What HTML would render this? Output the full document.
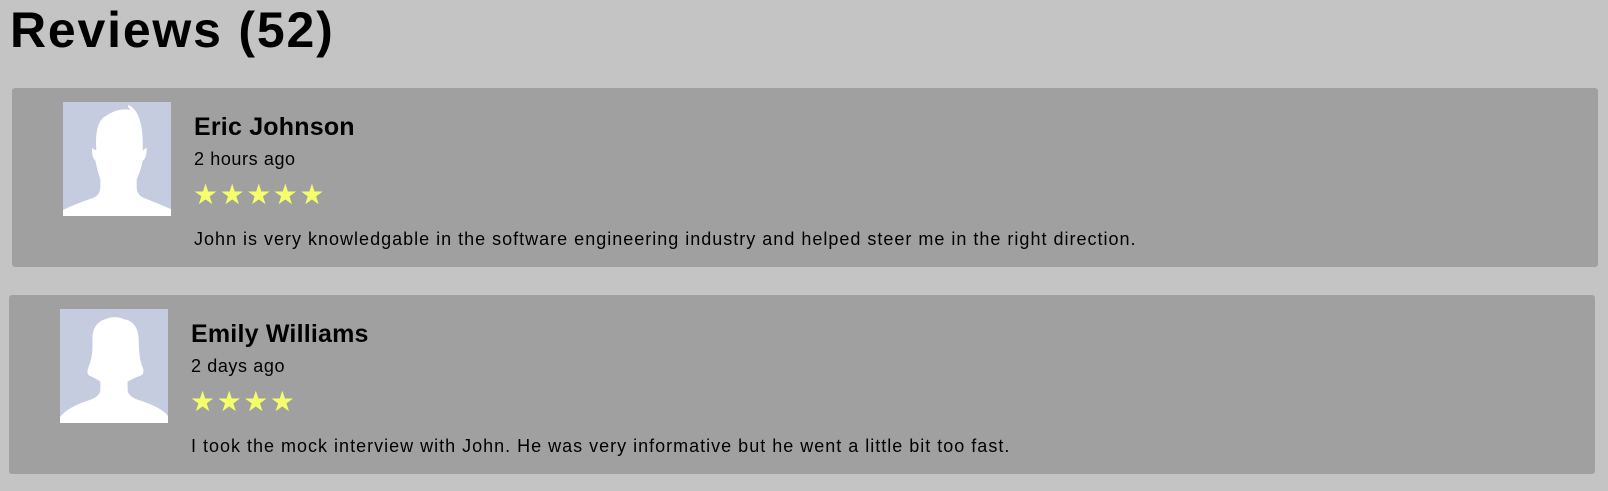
<!DOCTYPE html>
<html><head><style>
body{margin:0;background:#c4c4c4;font-family:"Liberation Sans",Arial,sans-serif;width:1608px;height:491px;overflow:hidden;position:relative;color:#000}
h1{position:absolute;left:10px;top:1px;margin:0;font-size:50px;font-weight:bold;letter-spacing:1.8px}
.card{position:absolute;background:#a0a0a0;border-radius:3px;width:1586px;height:179px}
.av{position:absolute;left:51px;top:14px;width:108px;height:114px;background:#c5cce0;overflow:hidden}
.name{position:absolute;left:182px;top:25px;font-size:25px;font-weight:bold;letter-spacing:0.2px}
.time{position:absolute;left:182px;top:61px;font-size:18px;letter-spacing:0.6px}
.stars{position:absolute;left:181px;top:93px;font-size:28px;color:#f4ff6a;letter-spacing:1.5px;line-height:1}
.txt{position:absolute;left:182px;top:141px;font-size:18px;letter-spacing:1px}
</style></head><body>
<h1>Reviews (52)</h1>
<div class="card" style="left:12px;top:88px">
<div class="av"><svg width="108" height="114" viewBox="0 0 107 113"><path fill="#fff" d="M0 113 V107 Q12 101 30 95 Q37 92 37 84 V77 Q34 68 32 58 Q28 55 29 45 Q30 47 33 48 Q31 20 42 14 Q55 5 67 8 Q63 4 65 3 Q80 10 79 48 Q82 46 83 45 Q83 56 79 58 Q77 68 73 77 V84 Q73 92 80 95 Q95 101 107 106 V113 Z"/></svg></div>
<div class="name">Eric Johnson</div>
<div class="time">2 hours ago</div>
<div class="stars">★★★★★</div>
<div class="txt">John is very knowledgable in the software engineering industry and helped steer me in the right direction.</div>
</div>
<div class="card" style="left:9px;top:295px">
<div class="av"><svg width="108" height="114" viewBox="0 0 107 113"><path fill="#fff" d="M0 113 V107 Q8 97 30 90 Q40 86 40 80 V72 Q34 68 29 66 Q26 64 28 58 Q33 48 32 30 Q32 14 45 10 Q55 6 63 10 Q77 12 78 30 Q78 50 82 58 Q84 64 80 66 Q74 68 67 72 V80 Q67 86 77 90 Q100 97 107 106 V113 Z"/></svg></div>
<div class="name">Emily Williams</div>
<div class="time">2 days ago</div>
<div class="stars">★★★★</div>
<div class="txt">I took the mock interview with John. He was very informative but he went a little bit too fast.</div>
</div>
</body></html>
